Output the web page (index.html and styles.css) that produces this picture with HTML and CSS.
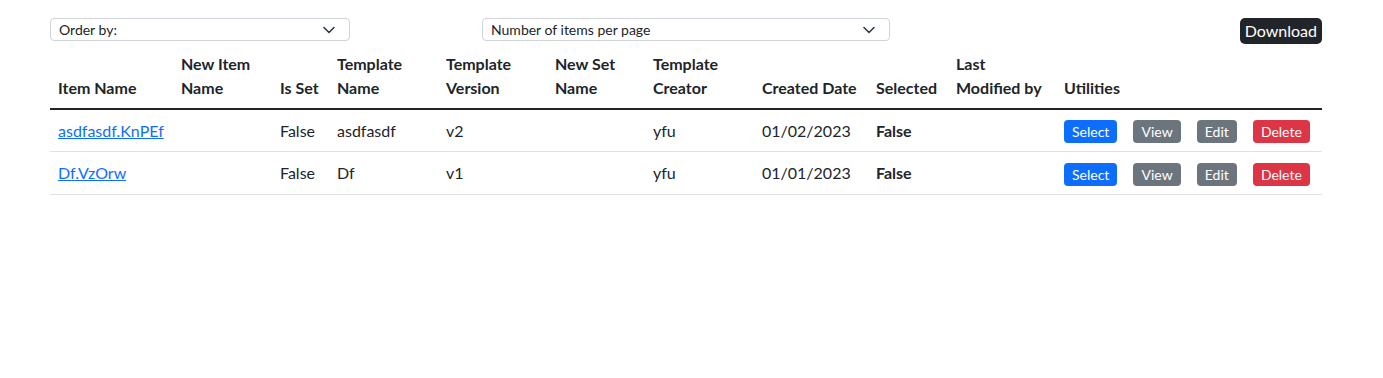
FILE: index.html
```html
<!DOCTYPE html>
<html lang="en">
  <head>
    <meta charset="UTF-8" />
    <meta name="viewport" content="width=device-width, initial-scale=1.0" />
    <title>Items</title>
    <link rel="stylesheet" href="styles.css">
  </head>
  <body>
    <div class="page">
      <div class="toolbar">
        <div class="select order-select">
          <span>Order by:</span>
          <svg class="chevron" width="12" height="8" viewBox="0 0 12 8">
            <path d="M1 1.5l5 5 5-5" fill="none" stroke="#343a40" stroke-width="1.6" stroke-linecap="round" stroke-linejoin="round" />
          </svg>
        </div>
        <div class="select page-select">
          <span>Number of items per page</span>
          <svg class="chevron" width="12" height="8" viewBox="0 0 12 8">
            <path d="M1 1.5l5 5 5-5" fill="none" stroke="#343a40" stroke-width="1.6" stroke-linecap="round" stroke-linejoin="round" />
          </svg>
        </div>
        <button class="download-button">Download</button>
      </div>

      <table class="items-table">
        <colgroup>
          <col style="width: 123px" />
          <col style="width: 99px" />
          <col style="width: 57px" />
          <col style="width: 109px" />
          <col style="width: 109px" />
          <col style="width: 98px" />
          <col style="width: 109px" />
          <col style="width: 114px" />
          <col style="width: 80px" />
          <col style="width: 108px" />
          <col style="width: 266px" />
        </colgroup>
        <thead>
          <tr>
            <th>Item Name</th>
            <th>New Item Name</th>
            <th>Is Set</th>
            <th>Template Name</th>
            <th>Template Version</th>
            <th>New Set Name</th>
            <th>Template Creator</th>
            <th>Created Date</th>
            <th>Selected</th>
            <th>Last Modified by</th>
            <th>Utilities</th>
          </tr>
        </thead>
        <tbody>
          <tr>
            <td><a href="#">asdfasdf.KnPEf</a></td>
            <td></td>
            <td>False</td>
            <td>asdfasdf</td>
            <td>v2</td>
            <td></td>
            <td>yfu</td>
            <td>01/02/2023</td>
            <td><strong>False</strong></td>
            <td></td>
            <td>
              <button class="util-btn btn-select">Select</button>
              <button class="util-btn btn-view">View</button>
              <button class="util-btn btn-edit">Edit</button>
              <button class="util-btn btn-delete">Delete</button>
            </td>
          </tr>
          <tr>
            <td><a href="#">Df.VzOrw</a></td>
            <td></td>
            <td>False</td>
            <td>Df</td>
            <td>v1</td>
            <td></td>
            <td>yfu</td>
            <td>01/01/2023</td>
            <td><strong>False</strong></td>
            <td></td>
            <td>
              <button class="util-btn btn-select">Select</button>
              <button class="util-btn btn-view">View</button>
              <button class="util-btn btn-edit">Edit</button>
              <button class="util-btn btn-delete">Delete</button>
            </td>
          </tr>
        </tbody>
      </table>
    </div>
  </body>
</html>
```

FILE: styles.css
```css
body {
  font-family: "Lato", "Open Sans", sans-serif;
  background: #ffffff;
  margin: 0;
  color: #212529;
  font-size: 16px;
  line-height: 1.5;
}

.page {
  width: 1272px;
  padding: 18px 0 0 50px;
}

.toolbar {
  display: flex;
  align-items: flex-start;
}

.select {
  display: flex;
  align-items: center;
  justify-content: space-between;
  box-sizing: border-box;
  height: 23px;
  padding: 0 14px 0 8px;
  border: 1px solid #ced4da;
  border-radius: 4px;
  font-size: 14px;
  line-height: 21px;
  color: #212529;
}

.order-select {
  width: 300px;
}

.page-select {
  width: 408px;
  margin-left: 132px;
}

.download-button {
  margin-left: auto;
  height: 26px;
  padding: 0 5px;
  border: none;
  border-radius: 5px;
  background-color: #212529;
  color: #ffffff;
  font-family: inherit;
  font-size: 16px;
  line-height: 26px;
  cursor: pointer;
}

.items-table {
  width: 1272px;
  table-layout: fixed;
  border-collapse: collapse;
}

.items-table th {
  text-align: left;
  vertical-align: bottom;
  font-weight: 700;
  padding: 8px;
  border-bottom: 2px solid #212529;
}

.items-table td {
  padding: 8px;
  vertical-align: middle;
  border-bottom: 1px solid #dee2e6;
  height: 25px;
}

.items-table a {
  color: #0d6efd;
  text-decoration: underline;
}

.util-btn {
  display: inline-block;
  height: 23px;
  padding: 0 8px;
  border: none;
  border-radius: 4px;
  color: #ffffff;
  font-family: inherit;
  font-size: 14px;
  line-height: 23px;
  vertical-align: middle;
  cursor: pointer;
}

.util-btn + .util-btn {
  margin-left: 12px;
}

.btn-select {
  background-color: #0d6efd;
}

.btn-view,
.btn-edit {
  background-color: #6c757d;
}

.btn-delete {
  background-color: #dc3545;
}
```
